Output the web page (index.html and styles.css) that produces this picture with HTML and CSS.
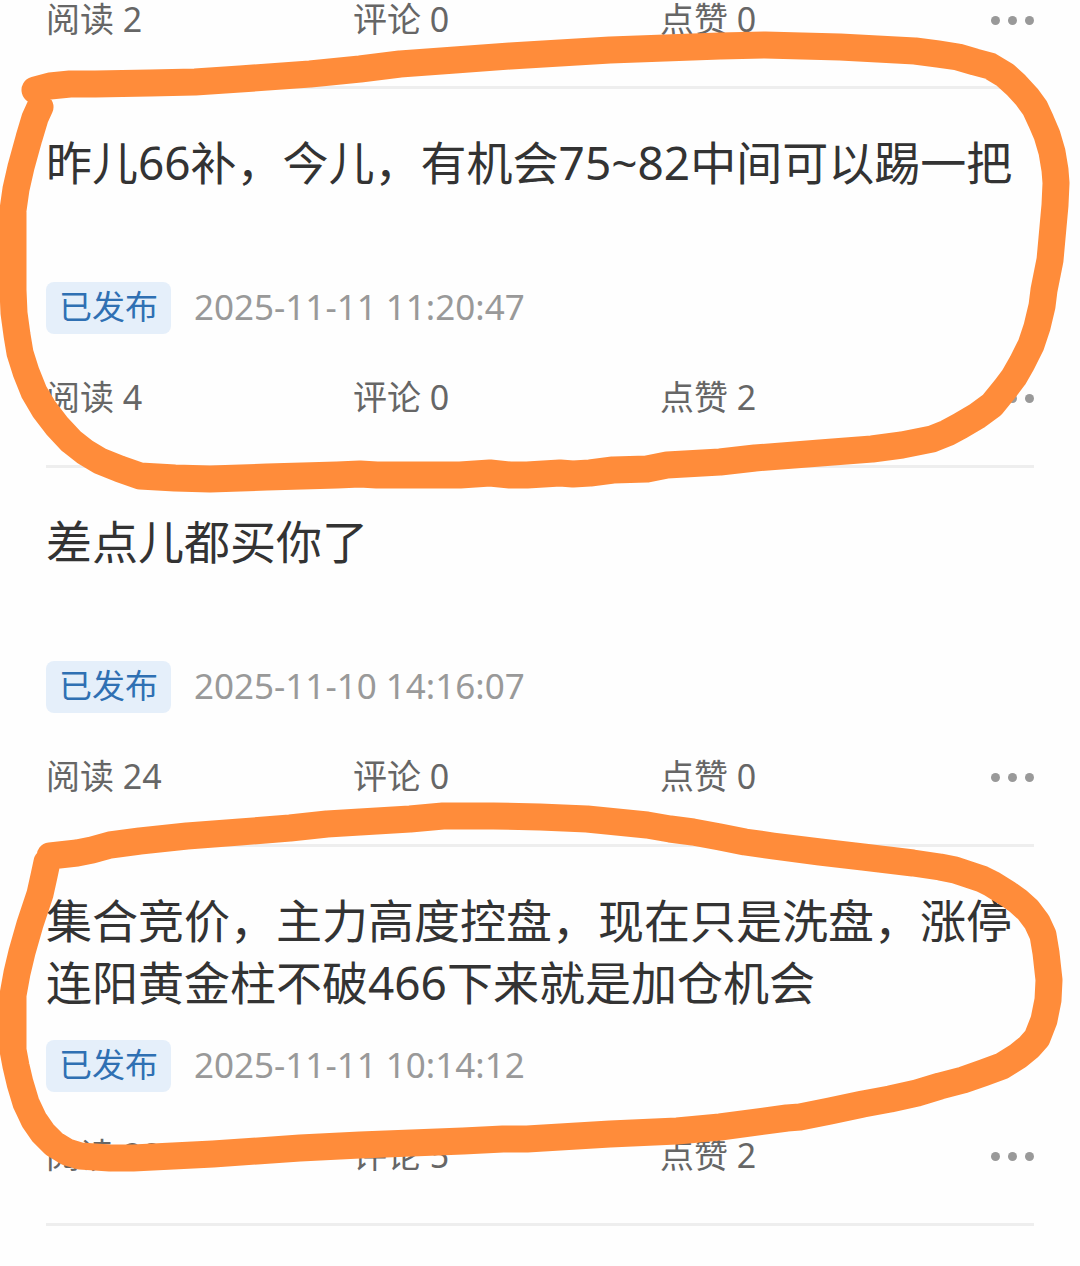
FILE: index.html
```html
<!DOCTYPE html>
<html lang="zh-CN">
<head>
  <meta charset="UTF-8" />
  <meta name="viewport" content="width=device-width, initial-scale=1.0"/>
  <title>我的帖子</title>
  <link rel="stylesheet" href="styles.css">
</head>
<body>

  <main class="posts">
    <article class="post post-cut">
      <div class="stats">
        <span>阅读 2</span>
        <span>评论 0</span>
        <span>点赞 0</span>
        <button class="more" type="button" aria-label="更多"><i></i><i></i><i></i></button>
      </div>
    </article>

    <article class="post">
      <h2 class="title">昨儿66补，今儿，有机会75~82中间可以踢一把</h2>
      <div class="meta">
        <span class="tag">已发布</span>
        <time class="date">2025-11-11 11:20:47</time>
      </div>
      <div class="stats">
        <span>阅读 4</span>
        <span>评论 0</span>
        <span>点赞 2</span>
        <button class="more" type="button" aria-label="更多"><i></i><i></i><i></i></button>
      </div>
    </article>

    <article class="post">
      <h2 class="title">差点儿都买你了</h2>
      <div class="meta">
        <span class="tag">已发布</span>
        <time class="date">2025-11-10 14:16:07</time>
      </div>
      <div class="stats">
        <span>阅读 24</span>
        <span>评论 0</span>
        <span>点赞 0</span>
        <button class="more" type="button" aria-label="更多"><i></i><i></i><i></i></button>
      </div>
    </article>

    <article class="post">
      <h2 class="title">集合竞价，主力高度控盘，现在只是洗盘，涨停连阳黄金柱不破466下来就是加仓机会</h2>
      <div class="meta">
        <span class="tag">已发布</span>
        <time class="date">2025-11-11 10:14:12</time>
      </div>
      <div class="stats">
        <span>阅读 22</span>
        <span>评论 5</span>
        <span>点赞 2</span>
        <button class="more" type="button" aria-label="更多"><i></i><i></i><i></i></button>
      </div>
    </article>
  </main>

  <!-- hand-drawn marker circles over the list -->
  <svg class="marker" viewBox="0 0 1080 1266" aria-hidden="true">
    <polyline points="35,90 50,86 70,84 95,84 150,83 195,82 240,79 310,74 360,69 400,64 455,60 510,56 610,50 665,48 720,46 765,45 840,47 915,51 938,54 958,57 975,62 990,66 1005,75 1016,85 1027,97 1035,108 1041,121 1047,135 1052,152 1055,170 1056,183 1055,205 1053,227 1050,260 1047,275 1044,290 1042,306 1037,327 1031,345 1022,363 1014,377 1005,389 992,405 977,416 960,426 947,433 932,439 902,445 872,449 820,453 755,458 720,462 667,465 647,469 613,470 590,473 573,474 560,473 527,475 510,475 490,473 460,475 420,475 377,475 360,474 337,475 267,477 210,479 175,478 140,476 120,469 100,461 85,452 71,441 57,426 44,409 34,392 26,372 20,353 17,335 14,313 13,290 13,210 16,189 21,167 29,138 35,118 40,107" />
    <polyline points="50,856 77,853 92,850 110,845 140,841 187,836 240,832 290,828 327,824 360,822 410,819 443,816 493,816 540,817 587,819 647,825 670,829 693,832 720,837 745,842 773,846 820,852 863,857 913,863 940,867 955,870 970,875 982,879 992,884 1008,894 1018,901 1028,910 1037,922 1043,935 1046,953 1049,980 1048,1000 1044,1020 1037,1038 1029,1047 1018,1056 1002,1066 983,1073 963,1080 940,1086 917,1093 890,1099 863,1104 830,1111 800,1117 787,1118 720,1127 677,1131 610,1134 527,1139 503,1139 463,1141 360,1145 300,1148 213,1154 133,1158 110,1158 80,1156 67,1152 54,1144 43,1133 34,1120 26,1103 20,1083 16,1066 13,1050 13,995 17,973 22,952 30,924 40,894 44,876 47,862" />
  </svg>

</body>
</html>
```

FILE: styles.css
```css
* {
  box-sizing: border-box;
}

body {
  margin: 0;
  position: relative;
  overflow-x: hidden;
  background: #fefefe;
  color: #333;
  font-family: "Noto Sans", "Noto Sans CJK SC", sans-serif;
}

.posts {
  padding: 0 46px 40px;
}

.post {
  padding: 42px 0 44px;
  border-bottom: 3px solid #eee;
}

.title {
  margin: 0 0 27px;
  min-height: 124px;
  font-size: 46px;
  font-weight: 400;
  line-height: 62px;
}

.meta {
  display: flex;
  align-items: center;
  gap: 23px;
  margin-bottom: 40px;
}

.tag {
  padding: 0 13px 2px;
  border-radius: 8px;
  background: #e5effa;
  color: #2f70b3;
  font-size: 33px;
  line-height: 50px;
}

.date {
  padding-bottom: 2px;
  color: #999;
  font-size: 35px;
  line-height: 50px;
}

.stats {
  display: grid;
  grid-template-columns: repeat(3, 1fr) 67px;
  align-items: center;
  color: #666;
  font-size: 34px;
  line-height: 47px;
}

/* first post is scrolled off, only its counters are left */
.post-cut {
  padding: 0 0 48px;
}

.post-cut .stats {
  line-height: 38px;
}

.more {
  display: flex;
  justify-content: flex-end;
  gap: 8px;
  padding: 2px 0 0;
  border: none;
  background: none;
  cursor: pointer;
}

.more i {
  width: 9px;
  height: 9px;
  border-radius: 50%;
  background: #999;
}

.marker {
  position: absolute;
  top: 0;
  left: 0;
  width: 100%;
  pointer-events: none;
}

.marker polyline {
  fill: none;
  stroke: #ff8c3a;
  stroke-width: 27;
  stroke-linecap: round;
  stroke-linejoin: round;
}
```
